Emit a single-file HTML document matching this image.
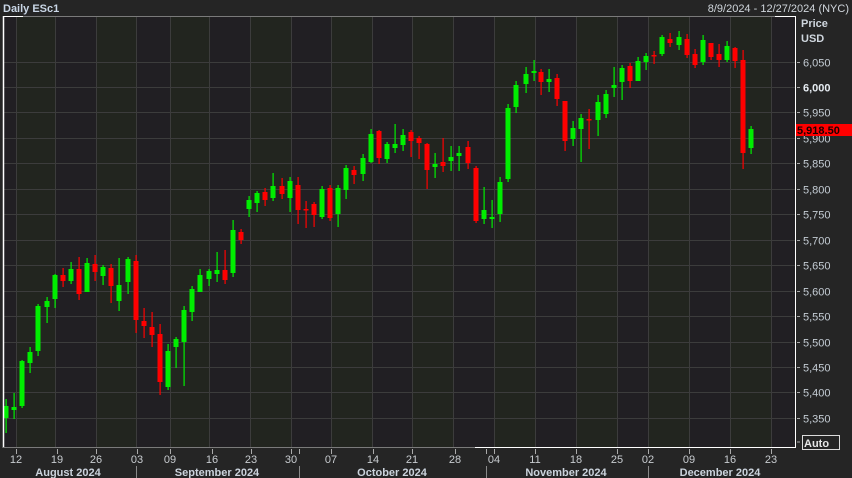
<!DOCTYPE html>
<html><head><meta charset="utf-8"><style>
html,body{margin:0;padding:0;background:#252525;width:852px;height:478px;overflow:hidden;font-family:"Liberation Sans",sans-serif}
svg{position:absolute;left:0;top:0}
</style></head><body>
<svg id="s" width="852" height="478" xmlns="http://www.w3.org/2000/svg">
<rect x="0" y="0" width="852" height="478" fill="#252525"/>
<g id="bands"></g>
<g id="grid" stroke="#3c3c3c" stroke-width="1"></g>
<g id="candles"></g>
<!-- borders -->
<line x1="3" y1="16.5" x2="795" y2="16.5" stroke="#7a7a7a"/>
<line x1="3" y1="16.5" x2="23" y2="16.5" stroke="#fff"/>
<line x1="775" y1="16.5" x2="795" y2="16.5" stroke="#fff"/>
<line x1="3.5" y1="16" x2="3.5" y2="448" stroke="#fff" stroke-width="1.5"/>
<line x1="795.5" y1="16" x2="795.5" y2="448" stroke="#fff"/>
<line x1="3" y1="447.5" x2="475" y2="447.5" stroke="#7a7a7a"/>
<line x1="475" y1="447.5" x2="796" y2="447.5" stroke="#fff"/>
<g fill="#dfe6ee" font-size="11">
<text x="3" y="12" font-weight="bold" fill="#c9d6e6">Daily ESc1</text>
<text x="849" y="12" text-anchor="end" fill="#d0d6dc">8/9/2024 - 12/27/2024 (NYC)</text>
</g>
<g fill="#cfd6de" font-size="11" font-weight="bold">
<text x="801" y="27">Price</text>
<text x="801" y="42">USD</text>
</g>
<g id="yax" fill="#c4ccd4" font-size="11" stroke="none"></g>
<rect x="796" y="124" width="56" height="12" fill="#ff0000"/>
<text x="797" y="134" font-size="11" font-weight="bold" fill="#1a0000">5,918.50</text>
<rect x="802.5" y="435.5" width="37" height="14" fill="none" stroke="#dcdcdc"/>
<text x="804" y="447" font-size="11" font-weight="bold" fill="#e6e6e6">Auto</text>
<line x1="797" y1="442" x2="800" y2="442" stroke="#aaa"/>
<g id="xax" fill="#c8ccd0" font-size="11"></g>
<g fill="#cbd3dc" font-size="11" font-weight="bold" text-anchor="middle">
<text x="68" y="476">August 2024</text>
<text x="217" y="476">September 2024</text>
<text x="392" y="476">October 2024</text>
<text x="566" y="476">November 2024</text>
<text x="720" y="476">December 2024</text>
</g>
<g stroke="#8a8a8a">
<line x1="136.5" y1="466" x2="136.5" y2="478"/>
<line x1="299.5" y1="466" x2="299.5" y2="478"/>
<line x1="486.5" y1="466" x2="486.5" y2="478"/>
<line x1="648.5" y1="466" x2="648.5" y2="478"/>
</g>
</svg>
<script>
var NS="http://www.w3.org/2000/svg";
function el(p,t,a,txt){var e=document.createElementNS(NS,t);for(var k in a)e.setAttribute(k,a[k]);if(txt)e.textContent=txt;document.getElementById(p).appendChild(e);}
var vx=[4,16,55,96,136,170,209,250,291,331,372,412,453,494,535,576,617,648,689,730,771,795];
for(var i=0;i<vx.length-1;i++){el("bands","rect",{x:vx[i],y:17,width:vx[i+1]-vx[i],height:431,fill:(i%2?"#22251f":"#211f23")});}
for(var i=1;i<vx.length-1;i++){el("grid","line",{x1:vx[i]+.5,y1:17,x2:vx[i]+.5,y2:447});}
function py(p){return 87+(6000-p)*0.509;}
for(var p=5350;p<=6050;p+=50){var y=Math.round(py(p))+.5;el("grid","line",{x1:4,y1:y,x2:795,y2:y});
 el("yax","line",{x1:797,y1:y,x2:800,y2:y,stroke:"#aaa"});
 if(p!=5900||true){var s=p.toString();s=s[0]+","+s.slice(1);el("yax","text",{x:803,y:y+4,"font-weight":p==6000?"bold":"normal",fill:p==6000?"#e6ecf2":"#c4ccd4"},s);}}
var days=[["12",16],["19",57],["26",96],["03",137],["09",170],["16",212],["23",251],["30",291],["07",331],["14",373],["21",412],["28",455],["04",494],["11",535],["18",576],["25",617],["02",648],["09",689],["16",730],["23",771]];
days.forEach(function(d){el("xax","line",{x1:d[1]+.5,y1:449,x2:d[1]+.5,y2:454,stroke:"#aaa"});el("xax","text",{x:d[1],y:463,"text-anchor":"middle"},d[0]);});
[299,486].forEach(function(x){el("xax","line",{x1:x+.5,y1:449,x2:x+.5,y2:454,stroke:"#aaa"});});
var C=[[6,"G",399,433,406,418],[14,"G",393,419,407,410],[22,"G",360,408,361,406],[30,"G",347,373,352,363],[38,"G",304,356,306,351],[47,"G",297,323,301,307],[55,"G",274,308,275,299],[63,"R",268,287,275,281],[71,"G",262,284,269,281],[79,"R",257,300,269,294],[87,"G",258,292,263,292],[95,"R",255,281,264,272],[103,"G",265,285,267,276],[111,"R",264,303,268,286],[119,"G",258,311,285,301],[128,"G",257,294,259,282],[136,"R",255,333,261,320],[144,"R",308,338,321,326],[152,"R",312,347,327,335],[160,"R",324,395,334,382],[168,"G",344,390,351,387],[176,"G",337,368,339,347],[184,"G",306,386,310,342],[192,"G",286,321,289,312],[200,"G",269,292,275,292],[209,"G",269,286,271,279],[217,"G",252,282,270,274],[225,"R",250,284,270,280],[233,"G",220,277,230,273],[241,"R",229,244,232,240],[249,"G",196,217,200,209],[257,"G",191,212,193,203],[265,"R",188,206,192,200],[273,"G",173,201,186,198],[282,"R",178,199,186,194],[290,"G",177,212,181,198],[298,"R",177,224,185,210],[306,"R",201,228,209,210],[314,"R",202,227,204,215],[322,"G",186,219,189,217],[330,"R",185,221,188,218],[338,"G",185,227,188,214],[346,"G",165,199,168,190],[354,"R",166,184,170,175],[363,"G",154,181,158,174],[371,"G",129,163,134,162],[379,"R",130,164,131,158],[387,"G",142,163,144,159],[395,"G",124,153,144,148],[403,"G",129,151,135,145],[411,"R",130,157,132,141],[419,"R",136,159,138,143],[427,"R",143,189,144,170],[435,"G",153,178,164,167],[443,"R",138,172,162,166],[451,"G",146,171,157,161],[459,"G",146,171,153,156],[468,"R",141,169,147,163],[476,"R",166,223,168,221],[484,"G",187,224,210,219],[492,"G",200,228,217,219],[500,"G",177,222,182,214],[508,"G",104,182,108,179],[516,"G",81,113,85,107],[526,"G",67,93,74,84],[534,"G",60,81,71,73],[541,"R",69,95,72,82],[549,"G",69,92,79,82],[557,"R",74,106,78,99],[565,"R",101,151,101,141],[573,"G",121,146,128,139],[581,"G",114,162,118,129],[589,"R",109,149,119,120],[598,"G",95,136,102,120],[606,"G",90,118,94,114],[614,"G",67,97,85,88],[622,"G",65,100,68,82],[630,"R",63,88,66,81],[638,"G",57,81,61,81],[646,"G",53,70,56,62],[654,"R",51,64,55,56],[662,"G",35,56,37,54],[670,"R",33,47,39,43],[679,"G",31,50,37,45],[687,"R",34,58,39,55],[695,"R",49,68,54,65],[703,"G",35,65,40,62],[711,"R",43,60,43,57],[719,"R",44,67,54,60],[727,"G",41,62,46,60],[735,"R",47,68,48,61],[743,"R",50,169,60,153],[751,"G",126,154,129,148]];
C.forEach(function(c){var col=c[1]=="G"?"#00ee00":"#ff0000";
 el("candles","rect",{x:c[0]-0.5,y:c[2],width:1.2,height:c[3]-c[2],fill:col});
 el("candles","rect",{x:c[0]-2.5,y:c[4],width:5,height:Math.max(1.5,c[5]-c[4]),fill:col});});
</script>
</body></html>
